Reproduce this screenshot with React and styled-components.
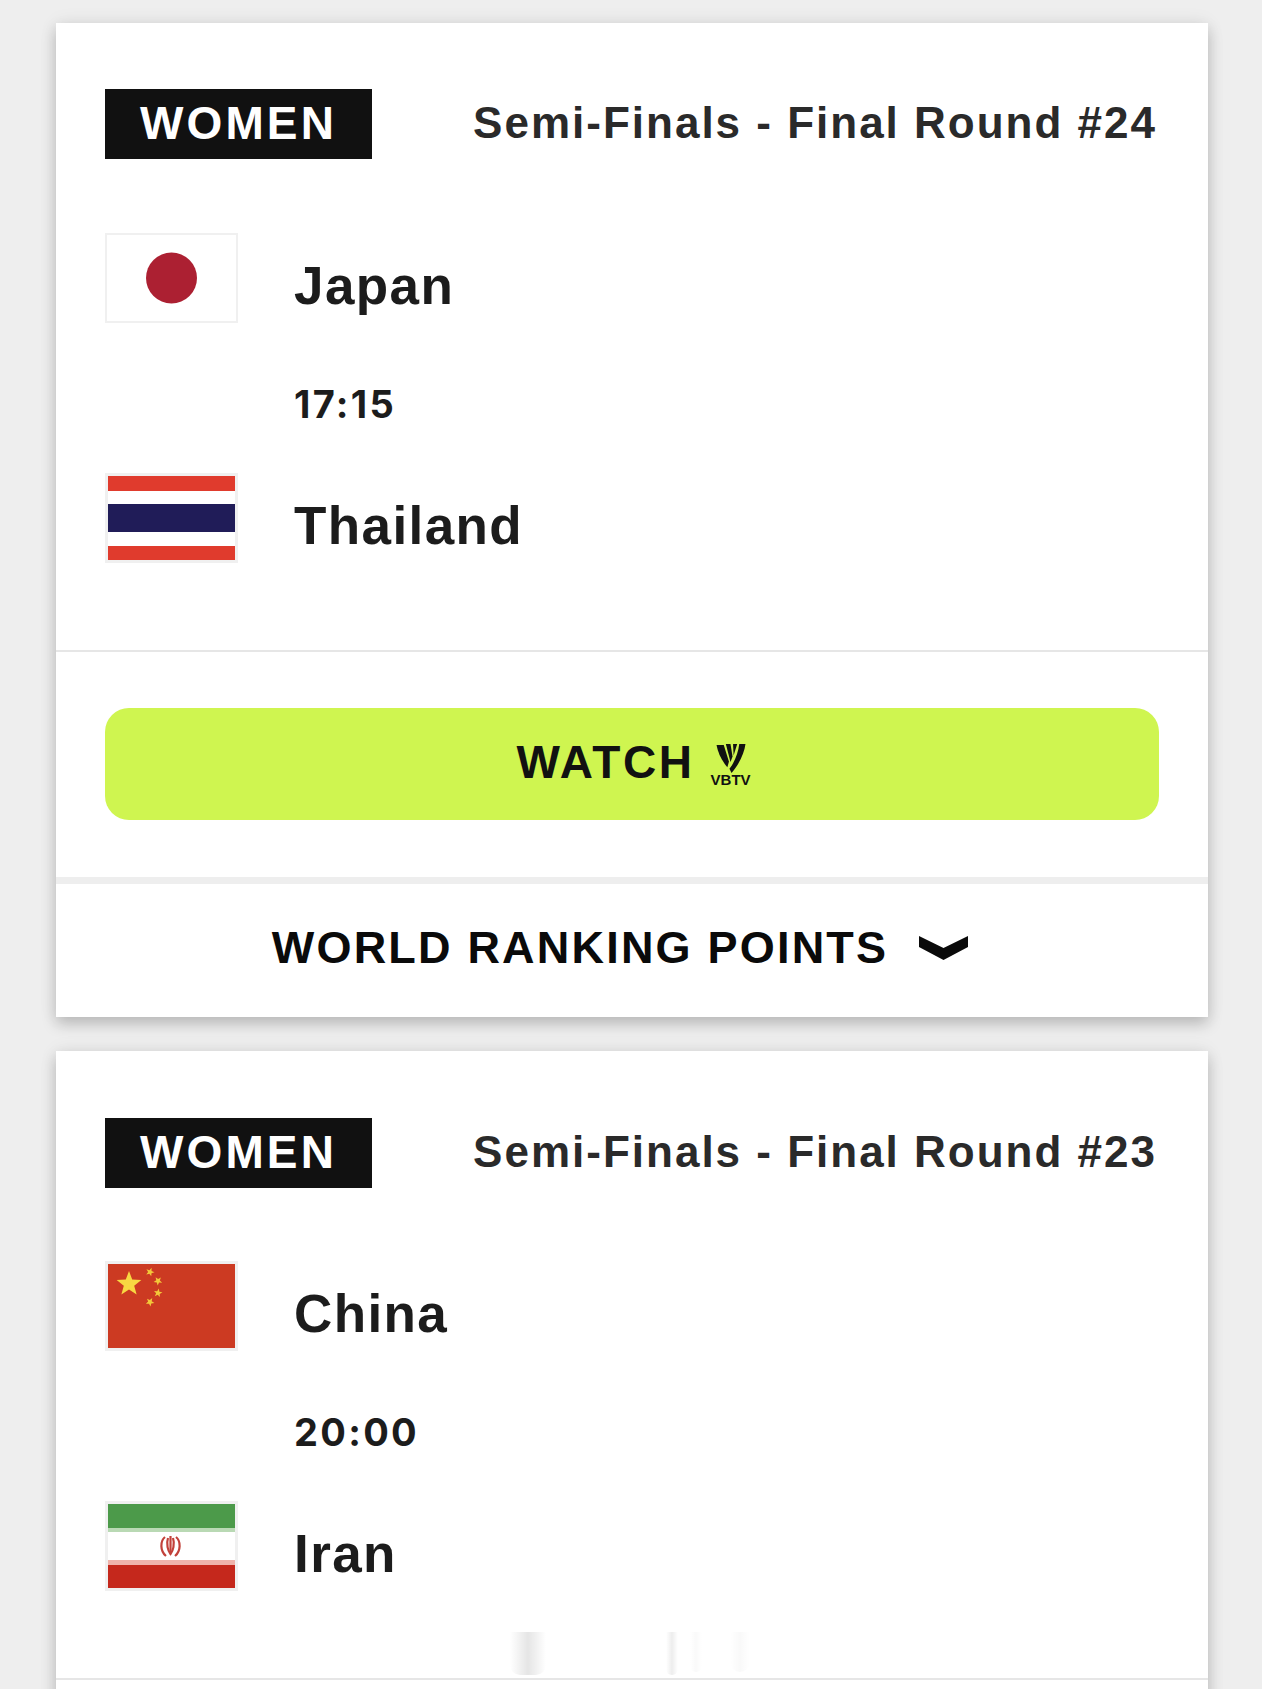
import React from "react";
import styled, { createGlobalStyle } from "styled-components";

const Global = createGlobalStyle`
  html, body { margin: 0; padding: 0; background: #eeeeee; }
  body { font-family: "Liberation Sans", Arial, sans-serif; }
`;

const Page = styled.div`
  position: relative;
  height: 1689px;
  overflow: hidden;
  padding: 23px 54px 0 56px;
  box-sizing: border-box;
  display: flex;
  flex-direction: column;
  gap: 34px;
`;

const Card = styled.section`
  background: #fff;
  box-shadow: 0 7px 14px rgba(0, 0, 0, 0.2), 0 0 18px rgba(0, 0, 0, 0.07);
  flex: ${(p) => (p.$fill ? "1 0 auto" : "none")};
  margin-bottom: ${(p) => (p.$fill ? "-40px" : "0")};
`;

const Main = styled.div`
  padding: ${(p) => p.$top}px 51px 87px 49px;
  border-bottom: 2px solid #e6e6e6;
`;

const Head = styled.div`
  display: flex;
  justify-content: space-between;
  align-items: center;
  margin-bottom: ${(p) => p.$gap}px;
`;

const Badge = styled.div`
  width: 267px;
  height: 70px;
  padding-bottom: 3px;
  box-sizing: border-box;
  background: #111;
  color: #fff;
  font-size: 46px;
  font-weight: 700;
  letter-spacing: 3.1px;
  display: flex;
  align-items: center;
  justify-content: center;
`;

const Round = styled.div`
  color: #2a2a2a;
  font-size: 44px;
  font-weight: 700;
  letter-spacing: 2px;
  white-space: nowrap;
  padding-bottom: 2px;
`;

const Team = styled.div`
  display: flex;
  align-items: center;
  gap: 56px;
  height: 90px;
`;

const FlagBox = styled.svg`
  width: 133px;
  height: 90px;
  display: block;
  flex: none;
`;

const Name = styled.div`
  color: #1c1c1c;
  font-size: 53px;
  font-weight: 700;
  letter-spacing: 1.4px;
  padding-top: 14px;
`;

const Time = styled.div`
  height: 150px;
  padding: 12px 0 0 189px;
  box-sizing: border-box;
  display: flex;
  align-items: center;
  color: #1c1c1c;
  font-family: Inter, "Liberation Sans", sans-serif;
  font-size: 38px;
  font-weight: 700;
  letter-spacing: 2.3px;
`;

const WatchArea = styled.div`
  padding: 56px 49px 57px 49px;
  border-bottom: 7px solid #eeeeee;
`;

const WatchButton = styled.button`
  width: 100%;
  height: 112px;
  border: 0;
  border-radius: 24px;
  background: #cff550;
  color: #111;
  font: 700 46px "Liberation Sans", Arial, sans-serif;
  letter-spacing: 2.6px;
  display: flex;
  align-items: center;
  justify-content: center;
  gap: 15px;
  padding: 0 0 4px 4px;
`;

const Logo = styled.span`
  display: flex;
  flex-direction: column;
  align-items: center;
  width: 42px;
  margin-top: 4px;
`;

const LogoText = styled.span`
  font-size: 15px;
  line-height: 12px;
  font-weight: 700;
  letter-spacing: 0;
`;

const Ranking = styled.div`
  height: 133px;
  box-sizing: border-box;
  display: flex;
  align-items: center;
  justify-content: center;
  gap: 31px;
  color: #0a0a0a;
  font-size: 45px;
  font-weight: 700;
  letter-spacing: 2.2px;
  padding: 0 24px 6px 0;
`;

const Ghost = styled.i`
  position: absolute;
  top: ${(p) => p.$top}px;
  left: ${(p) => p.$left}px;
  width: ${(p) => p.$w}px;
  height: ${(p) => p.$h}px;
  border-radius: 0 0 10px 10px;
  background: linear-gradient(to right, rgba(0,0,0,0), rgba(0,0,0,${(p) => p.$a}), rgba(0,0,0,0));
`;

function JapanFlag() {
  return (
    <FlagBox viewBox="0 0 133 90">
      <rect width="133" height="90" fill="#f0f0f0" />
      <rect x="2" y="2" width="129" height="86" fill="#fff" />
      <circle cx="66.5" cy="45" r="25.5" fill="#ac2032" />
    </FlagBox>
  );
}

function ThailandFlag() {
  return (
    <FlagBox viewBox="0 0 133 90">
      <rect width="133" height="90" fill="#f0f0f0" />
      <rect x="3" y="3" width="127" height="84" fill="#fff" />
      <rect x="3" y="3" width="127" height="15" fill="#e03b2d" />
      <rect x="3" y="31" width="127" height="28" fill="#201c58" />
      <rect x="3" y="73" width="127" height="14" fill="#e03b2d" />
    </FlagBox>
  );
}

const star = (cx, cy, r, rot = 0) => {
  const pts = [];
  for (let i = 0; i < 10; i++) {
    const a = ((-90 + rot + i * 36) * Math.PI) / 180;
    const d = i % 2 ? r * 0.42 : r;
    pts.push(`${(cx + d * Math.cos(a)).toFixed(2)},${(cy + d * Math.sin(a)).toFixed(2)}`);
  }
  return pts.join(" ");
};

function ChinaFlag() {
  return (
    <FlagBox viewBox="0 0 133 90">
      <rect width="133" height="90" fill="#f0f0f0" />
      <rect x="3" y="3" width="127" height="84" fill="#cc3a22" />
      <polygon points={star(24, 23, 13)} fill="#f8d842" />
      <polygon points={star(45, 11, 4.5, 20)} fill="#f3c83a" />
      <polygon points={star(53, 20, 4.5, 40)} fill="#f3c83a" />
      <polygon points={star(53, 32, 4.5, 10)} fill="#f3c83a" />
      <polygon points={star(45, 41, 4.5, 30)} fill="#f3c83a" />
    </FlagBox>
  );
}

function IranFlag() {
  return (
    <FlagBox viewBox="0 0 133 90">
      <rect width="133" height="90" fill="#f0f0f0" />
      <rect x="3" y="3" width="127" height="84" fill="#fff" />
      <rect x="3" y="3" width="127" height="24" fill="#4c9a4a" />
      <rect x="3" y="27" width="127" height="4" fill="#b9d9b4" />
      <rect x="3" y="59" width="127" height="5" fill="#efb3ab" />
      <rect x="3" y="64" width="127" height="23" fill="#c5281c" />
      <g fill="none" stroke="#c2413a" strokeWidth="2.2">
        <path d="M60 36c-5 4-5 14 1 19M71 36c5 4 5 14-1 19" />
        <path d="M63 37c-2 6 0 13 2.500 16c2.500-3 4.500-10 2.500-16" />
        <path d="M65.500 35v17" />
      </g>
    </FlagBox>
  );
}

function Shield() {
  return (
    <svg width="32" height="31" viewBox="0 0 30 30">
      <path d="M1 2h7l5 16-1.500 5.500C6 17 2.500 10 1 2z" fill="#111" />
      <path d="M10 1h4.500l2 12-2 5.500z" fill="#111" />
      <path d="M17 1h4l-3.500 11z" fill="#111" />
      <path d="M23 1h6c-1 9-6.500 20-13.500 28l-2-4C19 18 22 9 23 1z" fill="#111" />
    </svg>
  );
}

function Chevron() {
  return (
    <svg width="49" height="24" viewBox="0 0 49 24">
      <polygon points="0,0 24.500,12 49,0 49,11 24.500,24 0,11" fill="#0a0a0a" />
    </svg>
  );
}

function Match({ top, gap, round, home, away, time, HomeFlag, AwayFlag, footer }) {
  return (
    <Card $fill={!footer}>
      <Main $top={top}>
        <Head $gap={gap}>
          <Badge>WOMEN</Badge>
          <Round>{round}</Round>
        </Head>
        <Team>
          <HomeFlag />
          <Name>{home}</Name>
        </Team>
        <Time>{time}</Time>
        <Team>
          <AwayFlag />
          <Name>{away}</Name>
        </Team>
      </Main>
      {footer && (
        <>
          <WatchArea>
            <WatchButton>
              WATCH
              <Logo>
                <Shield />
                <LogoText>VBTV</LogoText>
              </Logo>
            </WatchButton>
          </WatchArea>
          <Ranking>
            WORLD RANKING POINTS
            <Chevron />
          </Ranking>
        </>
      )}
    </Card>
  );
}

export default function App() {
  return (
    <>
      <Global />
      <Page>
        <Match
          top={66}
          gap={74}
          round="Semi-Finals - Final Round #24"
          home="Japan"
          away="Thailand"
          time="17:15"
          HomeFlag={JapanFlag}
          AwayFlag={ThailandFlag}
          footer
        />
        <Match
          top={67}
          gap={73}
          round="Semi-Finals - Final Round #23"
          home="China"
          away="Iran"
          time="20:00"
          HomeFlag={ChinaFlag}
          AwayFlag={IranFlag}
        />
        <Ghost $top={1632} $left={510} $w={36} $h={43} $a={0.1} />
        <Ghost $top={1632} $left={666} $w={12} $h={43} $a={0.07} />
        <Ghost $top={1632} $left={690} $w={12} $h={40} $a={0.025} />
        <Ghost $top={1632} $left={730} $w={20} $h={40} $a={0.025} />
      </Page>
    </>
  );
}
